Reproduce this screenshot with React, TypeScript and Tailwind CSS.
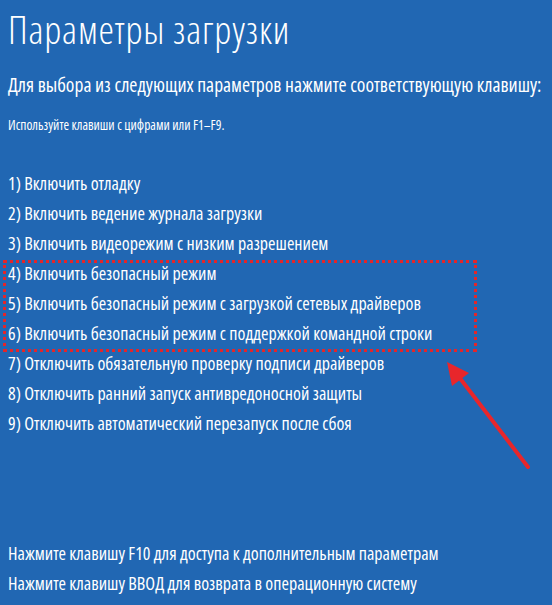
const OPTIONS_TOP = [
  '1) Включить отладку',
  '2) Включить ведение журнала загрузки',
  '3) Включить видеорежим с низким разрешением',
];

const OPTIONS_SAFE = [
  '4) Включить безопасный режим',
  '5) Включить безопасный режим с загрузкой сетевых драйверов',
  '6) Включить безопасный режим с поддержкой командной строки',
];

const OPTIONS_BOTTOM = [
  '7) Отключить обязательную проверку подписи драйверов',
  '8) Отключить ранний запуск антивредоносной защиты',
  '9) Отключить автоматический перезапуск после сбоя',
];

function Line({ text }: { text: string }) {
  return <p className="h-[30px] leading-[30px] whitespace-nowrap text-[18px]">{text}</p>;
}

export default function App() {
  return (
    <div
      className="relative w-[552px] h-[605px] overflow-hidden bg-[#2167b3] text-white px-2 flex flex-col [font-stretch:80%]"
      style={{ fontFamily: '"Open Sans", "Noto Sans", sans-serif' }}
    >
      <h1 className="mt-[6px] text-[39px] leading-[46px] font-light tracking-[0.8px] whitespace-nowrap">Параметры загрузки</h1>
      <p className="mt-[20px] text-[19.5px] leading-[26px] whitespace-nowrap">
        Для выбора из следующих параметров нажмите соответствующую клавишу:
      </p>
      <p className="mt-[18px] text-[13.5px] leading-[18px] whitespace-nowrap">Используйте клавиши с цифрами или F1–F9.</p>

      <div className="mt-[34px] flex flex-col">
        {OPTIONS_TOP.map((t) => (
          <Line key={t} text={t} />
        ))}
        <div className="relative">
          {OPTIONS_SAFE.map((t) => (
            <Line key={t} text={t} />
          ))}
          {/* red dotted highlight drawn over the safe-mode options */}
          <div className="absolute -left-[5px] top-[2px] w-[474px] h-[92px] border-[3px] border-dotted border-[#e3262a]" />
        </div>
        {OPTIONS_BOTTOM.map((t) => (
          <Line key={t} text={t} />
        ))}
      </div>

      <div className="mt-auto mb-[7px] flex flex-col">
        <Line text="Нажмите клавишу F10 для доступа к дополнительным параметрам" />
        <Line text="Нажмите клавишу ВВОД для возврата в операционную систему" />
      </div>

      <svg className="absolute left-0 top-0" width="552" height="605" viewBox="0 0 552 605">
        <line x1="528" y1="467" x2="459" y2="377" stroke="#e8262b" strokeWidth="4" strokeLinecap="round" />
        <polygon points="447,362 469,373 452,386" fill="#e8262b" />
      </svg>
    </div>
  );
}
